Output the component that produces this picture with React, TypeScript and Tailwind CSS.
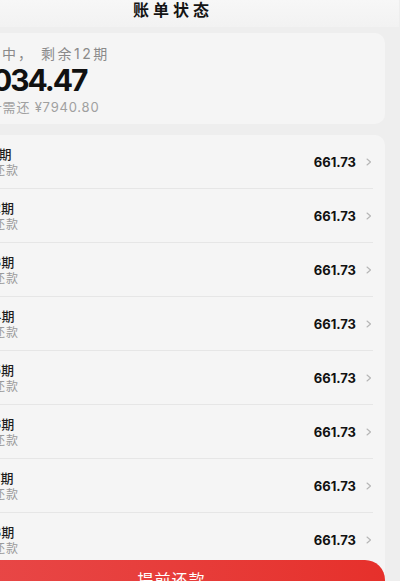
import React from "react";

const rows = Array.from({ length: 8 }, (_, i) => i + 1);

function Chevron() {
  return (
    <svg width="6" height="8" viewBox="0 0 6 8" fill="none" className="shrink-0">
      <path d="M1 1 L4.5 4 L1 7" stroke="#b5b5b5" strokeWidth="1.1" strokeLinecap="round" strokeLinejoin="round" />
    </svg>
  );
}

export default function App() {
  return (
    <div
      className="relative w-[400px] h-[581px] overflow-hidden bg-[#eeeeee]"
      style={{ fontFamily: 'Inter, "Noto Sans CJK SC", sans-serif' }}
    >
      <div className="-ml-[57px] w-[456px]">
        <header className="h-[27px] bg-gradient-to-b from-[#f7f7f7] to-[#f2f2f2] flex justify-center">
          <h1 className="text-[16px] leading-[20px] font-bold tracking-[4px] pl-[4px] text-[#141414]">账单状态</h1>
        </header>

        <section className="mx-[14px] mt-[6px] h-[91px] rounded-[10px] bg-[#f5f5f5] pl-[11px] pt-[11px]">
          <div className="ml-[2px] text-[14px] leading-[19px] tracking-[2px] text-[#8a8a8a] whitespace-nowrap">
            还款中，<span className="ml-[7px] tracking-[2.5px]">剩余12期</span>
          </div>
          <div className="ml-[7px] text-[30px] leading-[34px] font-bold text-[#111] tracking-[-2px]">2034.47</div>
          <div className="ml-[7px] mt-[2px] text-[13px] leading-[17px] tracking-[0.8px] text-[#a0a0a0] whitespace-nowrap">合计需还 ¥7940.80</div>
        </section>

        <section className="mx-[14px] mt-[11px] rounded-[10px] bg-[#f5f5f5] pb-[20px]">
          {rows.map((n, i) => (
            <div
              key={n}
              className={`ml-[23px] mr-[12px] h-[54px] flex items-center justify-between pr-[1px] ${
                i < rows.length - 1 ? "border-b border-[#e6e6e6]" : ""
              }`}
            >
              <div className="flex flex-col whitespace-nowrap">
                <span className="text-[13px] leading-[18px] font-medium text-[#1e1e1e]">第{n}期</span>
                <span className="text-[12px] leading-[16px] tracking-[1px] text-[#9a9a9a]">待还款</span>
              </div>
              <div className="flex items-center gap-[10px]">
                <span className="text-[13px] leading-[18px] font-bold text-[#111]">661.73</span>
                <Chevron />
              </div>
            </div>
          ))}
        </section>
      </div>

      <button className="absolute left-[-43px] top-[560px] w-[428px] h-[40px] rounded-full bg-gradient-to-r from-[#e84848] to-[#e6302b] flex items-center justify-center">
        <span className="text-[16px] leading-[20px] tracking-[1px] pl-[1px] text-white">提前还款</span>
      </button>
    </div>
  );
}
